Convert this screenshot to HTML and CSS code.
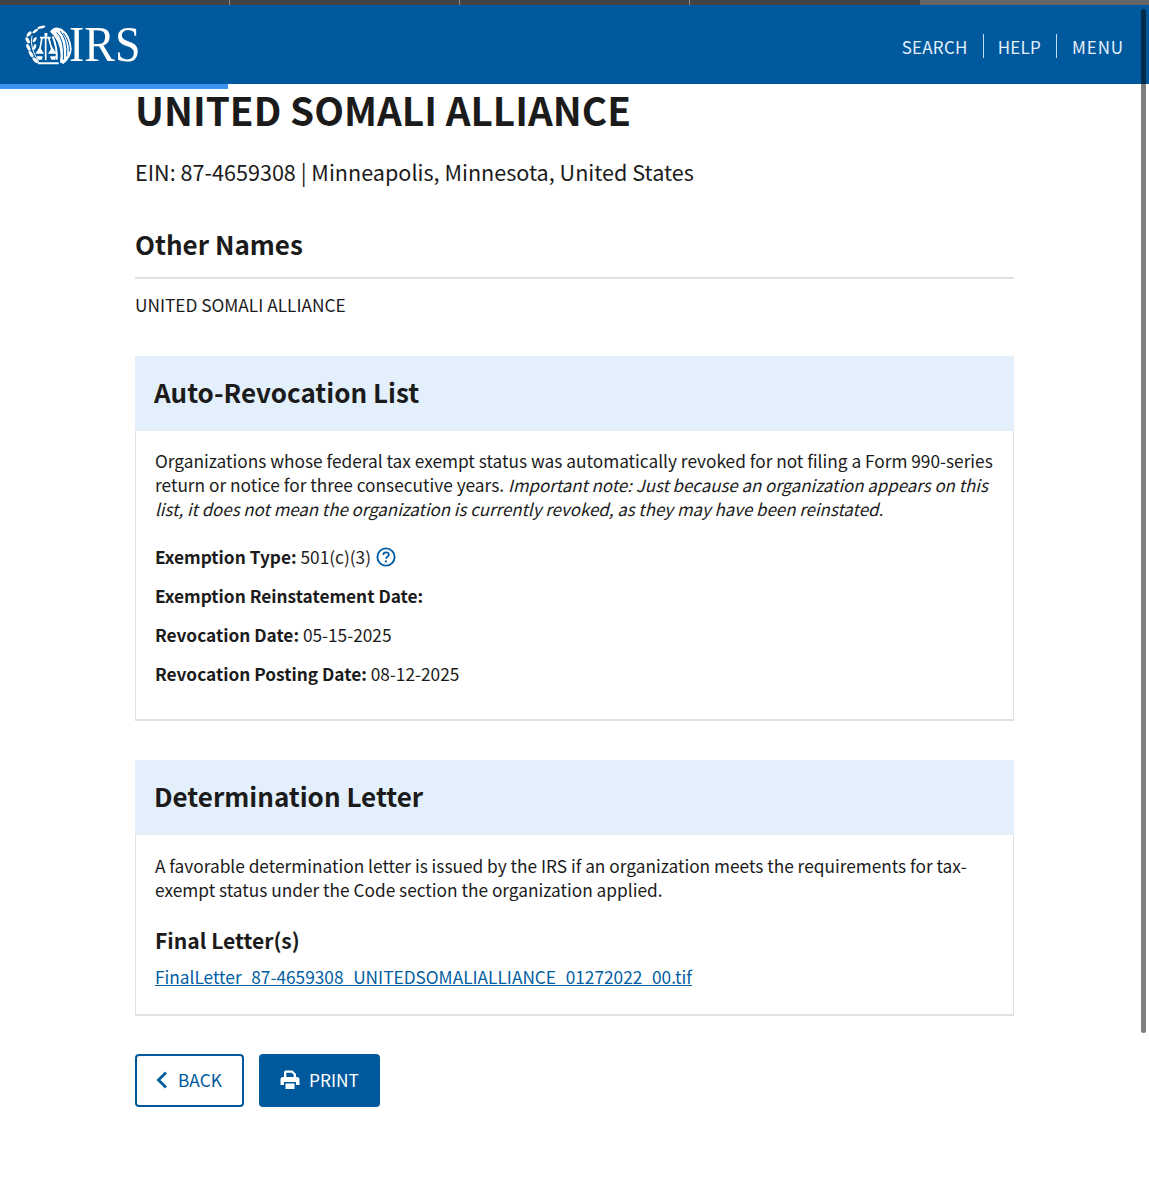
FILE: index.html
```html
<!DOCTYPE html>
<html>
<head>
    <title>United Somali Alliance</title>
    <link rel="stylesheet" href="styles.css">
</head>
<body>
    <div class="tabs">
        <span class="tab"></span><span class="tab"></span><span class="tab"></span><span class="tab tab-last"></span>
    </div>
    <header class="site-header">
        <a class="logo">
            <svg class="seal" width="47" height="42" viewBox="9 12 141 126">
                <!-- wreath -->
                <g fill="#fff">
                    <ellipse cx="21" cy="45" rx="10" ry="5" transform="rotate(-50 21 45)"/>
                    <ellipse cx="17" cy="64" rx="10" ry="5" transform="rotate(60 17 64)"/>
                    <ellipse cx="19" cy="85" rx="11" ry="5" transform="rotate(65 19 85)"/>
                    <ellipse cx="27" cy="105" rx="11" ry="5" transform="rotate(60 27 105)"/>
                    <ellipse cx="40" cy="124" rx="11" ry="5" transform="rotate(45 40 124)"/>
                    <ellipse cx="38" cy="62" rx="9" ry="4" transform="rotate(-55 38 62)"/>
                    <ellipse cx="38" cy="84" rx="9" ry="4" transform="rotate(-70 38 84)"/>
                    <ellipse cx="40" cy="36" rx="10" ry="4" transform="rotate(-35 40 36)"/>
                    <ellipse cx="58" cy="25" rx="12" ry="4" transform="rotate(-15 58 25)"/>
                </g>
                <path d="M30 50Q22 85 50 128" fill="none" stroke="#fff" stroke-width="3"/>
                <!-- eagle -->
                <path d="M84 38Q98 18 120 30Q146 48 149 90Q148 116 124 135L114 130Q122 85 96 50Z" fill="#fff"/>
                <path d="M104 40Q128 62 124 122M114 36Q138 62 134 112M124 42Q144 68 142 98" fill="none" stroke="#00599c" stroke-width="3"/>
                <path d="M92 52Q106 85 104 122" fill="none" stroke="#fff" stroke-width="6"/>
                <!-- scales -->
                <path d="M54 56H86M71 42V124M60 56 52 100M80 56 92 100" fill="none" stroke="#fff" stroke-width="5"/>
                <path d="M68 42h8v10h-8zM40 104h26l-13-20zM78 104h26L91 84zM48 130h62v6H48z" fill="#fff"/>
                <path d="M44 112h18l-2 10H48zM84 112h18l-2 10H88z" fill="#fff"/>
            </svg>
            <span class="logo-text">IRS</span>
        </a>
        <nav class="site-nav">
            <a>SEARCH</a>
            <a>HELP</a>
            <a class="menu-link">MENU</a>
        </nav>
    </header>
    <div class="header-accent"></div>

    <main class="content">
        <h1>UNITED SOMALI ALLIANCE</h1>
        <p class="ein">EIN: 87-4659308 | Minneapolis, Minnesota, United States</p>

        <h2 class="section-title">Other Names</h2>
        <p class="other-name">UNITED SOMALI ALLIANCE</p>

        <section class="panel panel-revocation">
            <h2 class="panel-head">Auto-Revocation List</h2>
            <div class="panel-body">
                <p class="intro">Organizations whose federal tax exempt status was automatically revoked for not filing a Form 990-series return or notice for three consecutive years. <em>Important note: Just because an organization appears on this list, it does not mean the organization is currently revoked, as they may have been reinstated.</em></p>
                <p class="field"><strong>Exemption Type:</strong> 501(c)(3)
                    <svg class="help-icon" width="20" height="20" viewBox="0 0 20 20">
                        <circle cx="10" cy="10" r="8.600" fill="none" stroke="#005ea2" stroke-width="1.900"/>
                        <path d="M7.300 8c0-1.600 1.200-2.600 2.800-2.600s2.700 1 2.700 2.300c0 2-2.800 2-2.800 4" fill="none" stroke="#005ea2" stroke-width="1.700"/>
                        <circle cx="10" cy="14.400" r="1.100" fill="#005ea2"/>
                    </svg>
                </p>
                <p class="field"><strong>Exemption Reinstatement Date:</strong></p>
                <p class="field"><strong>Revocation Date:</strong> 05-15-2025</p>
                <p class="field"><strong>Revocation Posting Date:</strong> 08-12-2025</p>
            </div>
        </section>

        <section class="panel panel-letter">
            <h2 class="panel-head">Determination Letter</h2>
            <div class="panel-body">
                <p class="intro">A favorable determination letter is issued by the IRS if an organization meets the requirements for tax-exempt status under the Code section the organization applied.</p>
                <h3>Final Letter(s)</h3>
                <a class="file-link" href="#">FinalLetter_87-4659308_UNITEDSOMALIALLIANCE_01272022_00.tif</a>
            </div>
        </section>

        <div class="actions">
            <a class="btn btn-back">
                <svg width="12" height="18" viewBox="0 0 12 18"><path d="M10 1.500 2.500 9l7.500 7.500" fill="none" stroke="#00599c" stroke-width="2.800"/></svg>
                <span>BACK</span>
            </a>
            <a class="btn btn-print">
                <svg width="20" height="20" viewBox="0 0 20 20">
                    <path d="M4 8V2.500A2 2 0 0 1 6 .5h6.500L16 4v4h-2.300V4.800L11.800 2.800H6.300V8z" fill="#fff"/>
                    <path d="M3 7h14a2.500 2.500 0 0 1 2.500 2.500V15H16v-3H4v3H.5V9.500A2.500 2.500 0 0 1 3 7z" fill="#fff"/>
                    <path d="M5.500 13.500h9v5.500h-9z" fill="#fff"/>
                </svg>
                <span>PRINT</span>
            </a>
        </div>
    </main>
    <div class="scrollbar"></div>
</body>
</html>
```

FILE: styles.css
```css
* { box-sizing: border-box; }
html, body { margin: 0; padding: 0; }
body { font-family: "Noto Sans CJK SC", "Noto Sans", sans-serif; color: #1b1b1b; background: #fff; height: 1200px; overflow: hidden; position: relative; }

.tabs { display: flex; height: 5px; background: #444; }
.tab { width: 230px; border-right: 1px solid #888; }
.tab-last { border-right: 0; }
.tabs::after { content: ""; flex: 1; background: #666; }

.site-header { display: flex; justify-content: space-between; align-items: center; height: 79px; background: #00599c; padding: 0 25px; }
.logo { display: flex; align-items: center; color: #fff; margin-top: -2px; }
.seal { margin-right: -3px; }
.logo-text { font-family: "Liberation Serif", serif; font-size: 51px; line-height: 42px; transform: scaleX(.9); transform-origin: left center; }
.site-nav { display: flex; align-items: center; color: #e3f0fb; font-size: 17px; line-height: 26px; margin-top: 2px; }
.site-nav a { height: 24px; padding: 0 15px; border-left: 1px solid #bcdcf5; letter-spacing: .25px; }
.site-nav a:first-child { border-left: 0; }
.site-nav a:nth-child(2) { padding-left: 14px; }
.site-nav .menu-link { padding-right: 0; letter-spacing: .9px; }
.header-accent { width: 228px; height: 5px; background: #3d94ee; }

.content { width: 879px; margin: 0 0 0 135px; }
h1 { font-size: 38.700px; line-height: 50px; font-weight: 700; margin: -5px 0 0; }
.ein { font-size: 21.600px; line-height: 32px; margin: 22px 0 0; }
.section-title { font-size: 26px; line-height: 36px; font-weight: 700; margin: 38px 0 0; padding-bottom: 15px; border-bottom: 2px solid #dfe1e2; }
.other-name { font-size: 17.280px; line-height: 24px; margin: 14px 0 0; }

.panel { border: 1px solid #dfe1e2; border-width: 0 1px 2px; }
.panel-revocation { margin-top: 39px; height: 365px; }
.panel-letter { margin-top: 39px; height: 256px; }
.panel-head { margin: 0 -1px; background: #e3f0fb; font-size: 26px; line-height: 36px; font-weight: 700; padding: 18px 19px 21px; height: 75px; }
.panel-body { padding: 18px 20px 0 19px; font-size: 17.280px; line-height: 24px; }
.panel-letter .panel-body { padding-top: 19px; }
.intro { margin: 0; }
.intro em { font-size: 16.870px; }
.field { margin: 15px 0 0; }
.intro + .field { margin-top: 24px; }
.help-icon { vertical-align: -3px; margin-left: 1px; }
h3 { font-size: 21.100px; line-height: 28px; font-weight: 700; margin: 24px 0 0; }
.file-link { display: block; margin-top: 11px; color: #005ea2; text-decoration: underline; }

.actions { display: flex; gap: 15px; margin-top: 38px; }
.btn { display: flex; align-items: center; height: 53px; border-radius: 4px; font-size: 17.280px; }
.btn span { margin-top: -2px; }
.btn svg { margin-top: -2px; }
.btn-back { width: 109px; border: 2px solid #00599c; color: #00599c; padding-left: 19px; gap: 10px; }
.btn-print { width: 121px; background: #00599c; color: #fff; padding-left: 21px; gap: 9px; }

.scrollbar { position: absolute; top: 9px; right: 3px; width: 5px; height: 1024px; background: rgba(0,0,0,.5); border-radius: 3px; }
```
